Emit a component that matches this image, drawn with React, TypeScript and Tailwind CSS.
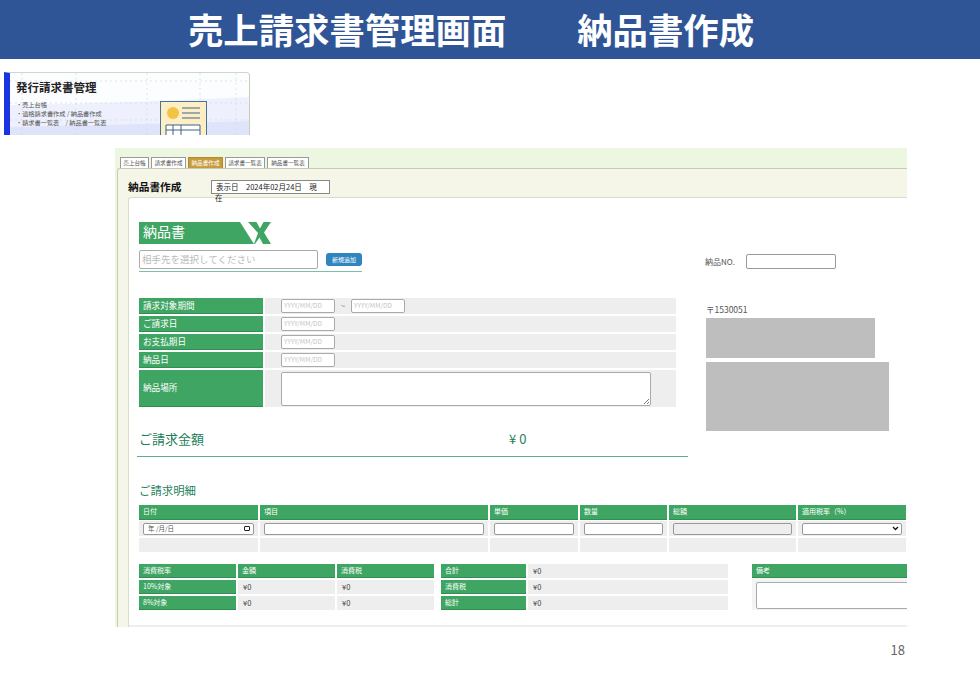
import React from "react";

const tabs = [
  { label: "売上台帳", w: "w-[29px]" },
  { label: "請求書作成", w: "w-[35px]" },
  { label: "納品書作成", w: "w-[35px]" },
  { label: "請求書一覧表", w: "w-[40px]" },
  { label: "納品書一覧表", w: "w-[42px]" },
];
const periodRows = [
  { label: "ご請求日" },
  { label: "お支払期日" },
  { label: "納品日" },
];
const detailCols = [
  { label: "日付", w: "w-[119px]" },
  { label: "項目", w: "w-[228px]" },
  { label: "単価", w: "w-[88px]" },
  { label: "数量", w: "w-[87px]" },
  { label: "総額", w: "w-[127px]" },
  { label: "適用税率（%）", w: "w-[108px]" },
];

const GreenCell = ({ children, className = "" }: { children: React.ReactNode; className?: string }) => (
  <div className={`flex items-center bg-[#3fa563] border-b border-[#2f8f52] pb-[1px] pl-[4px] text-white ${className}`}>
    {children}
  </div>
);

const DateBox = () => (
  <div className="flex h-[14px] w-[54px] items-center rounded-[2px] border border-[#aaaaaa] bg-white pl-[2px] text-[6.5px] text-[#c4c4c4]">
    YYYY/MM/DD
  </div>
);

const Yen = () => (
  <div className="flex items-center bg-[#eeeeee] pl-[5px] text-[7.5px] text-[#444444]">¥0</div>
);

const Thumbnail = () => (
  <div className="relative ml-1 mt-[13px] h-[63px] w-[246px] overflow-hidden rounded-tr-[4px] border-l-[6px] border-t border-r border-l-[#1a35e0] border-t-[#cfd8c8] border-r-[#c4cfb8] bg-[#fcfdfe]">
    <svg className="absolute inset-0" width="240" height="63" viewBox="0 0 240 63">
      <path d="M0 32 Q120 30 240 24 V63 H0Z" fill="#eef1fd" />
      <path d="M0 54 Q120 52 240 48 V63 H0Z" fill="#dfe4fa" />
      <path d="M0 8H240M0 30H240M0 47H240M12 0V63M66 0V63M137 0V63M190 0V63M226 0V63" stroke="#d4d8e2" strokeWidth="0.7" strokeDasharray="2 3" />
      <rect x="150.5" y="28.5" width="46" height="40" fill="#fdeec6" stroke="#4a7396" strokeWidth="1" />
      <circle cx="163" cy="40" r="6" fill="#f4c344" />
      <path d="M172 35H190M172 40H190M172 45H190" stroke="#3d6484" strokeWidth="1" />
      <path d="M156 52H190V63H156ZM163 52V63M171 52V63M156 57H190" fill="#ffffff" stroke="#3d6484" strokeWidth="1" />
    </svg>
    <div className="absolute left-[6px] top-[5px] text-[11.5px] leading-[18px] font-bold text-[#222222]">発行請求書管理</div>
    <div className="absolute left-[6px] top-[27px] text-[6.2px] leading-[9px] text-[#555555]">
      <div>・売上台帳</div>
      <div>・適格請求書作成 / 納品書作成</div>
      <div>・請求書一覧表　/ 納品書一覧表</div>
    </div>
  </div>
);

const InvoiceForm = () => (
  <div className="ml-[2px] flex min-h-0 flex-1 flex-col overflow-hidden rounded-tl-[3px] border-t border-l border-[#c9ccb2] bg-[#f5f5e8]">
    <div className="flex h-[28px] shrink-0 items-center pl-[10px] pt-[8px]">
      <div className="w-[83px] text-[10.7px] font-bold text-[#111111]">納品書作成</div>
      <div className="relative flex h-[14px] w-[119px] items-center border border-[#888888] bg-white pl-[4px] text-[7.5px] whitespace-nowrap text-[#222222]">
        表示日　2024年02月24日　現
        <span className="absolute left-[3px] top-[12px] leading-[9px]">在</span>
      </div>
    </div>
    <div className="ml-[10px] flex min-h-0 flex-1 flex-col rounded-tl-[3px] border-t border-l border-[#dcdccc] bg-white">
      <div className="flex flex-1 pl-[10px] pt-[24px]">
        <div className="w-[549px] shrink-0">
          <div className="flex h-[22px] items-center">
            <div className="flex h-full w-[115px] items-center bg-[#3fa563] pb-[3px] pl-[4px] text-[14px] text-white [clip-path:polygon(0_0,101px_0,100%_100%,0_100%)]">納品書</div>
            <svg width="23" height="22" viewBox="0 0 23 22" className="-ml-[6px] shrink-0">
              <path d="M0 0H8.5L12 6.5L15.5 0H23L16 10.5L23 22H15L11.5 15.5L7 22H6L10 11Z" fill="#3fa563" />
            </svg>
          </div>
          <div className="mt-[6px] flex w-[223px] items-center border-b border-[#7fbfa8] pb-[2px]">
            <div className="flex h-[19px] w-[179px] items-center rounded-[2px] border border-[#aaaaaa] pl-[2px] text-[9.5px] text-[#bbbbbb]">相手先を選択してください</div>
            <div className="ml-[8px] flex h-[13px] w-[36px] items-center justify-center rounded-[3px] bg-[#2f86bf] text-[6px] text-white">新規追加</div>
          </div>

          <div className="mt-[26px] flex flex-col gap-[2px]">
            <div className="flex h-[16px] gap-[2px]">
              <GreenCell className="w-[124px] text-[8.6px]">請求対象期間</GreenCell>
              <div className="flex w-[411px] items-center bg-[#eeeeee] pl-[16px]">
                <DateBox />
                <span className="w-[16px] text-center text-[8px] text-[#888888]">~</span>
                <DateBox />
              </div>
            </div>
            {periodRows.map((row) => (
              <div key={row.label} className="flex h-[16px] gap-[2px]">
                <GreenCell className="w-[124px] text-[8.6px]">{row.label}</GreenCell>
                <div className="flex w-[411px] items-center bg-[#eeeeee] pl-[16px]">
                  <DateBox />
                </div>
              </div>
            ))}
            <div className="flex h-[37px] gap-[2px]">
              <GreenCell className="w-[124px] text-[8.6px]">納品場所</GreenCell>
              <div className="flex w-[411px] items-center bg-[#eeeeee] pl-[16px]">
                <div className="relative h-[34px] w-[370px] rounded-[2px] border border-[#aaaaaa] bg-white">
                  <svg className="absolute bottom-0 right-0" width="7" height="7" viewBox="0 0 7 7">
                    <path d="M1 6L6 1M4 6L6 4" stroke="#555555" strokeWidth="0.8" />
                  </svg>
                </div>
              </div>
            </div>
          </div>

          <div className="-ml-[2px] mt-[23px] flex h-[27px] w-[551px] items-center border-b border-[#5fae8f] pb-[8px] pl-[2px] text-[13px] text-[#1f7f5c]">
            <span className="w-[370px]">ご請求金額</span>
            <span>¥ 0</span>
          </div>
        </div>

        <div className="flex-1 pl-[17px] pt-[32px] text-[8px] text-[#555555]">
          <div className="flex h-[15px] items-center">
            <span className="w-[41px]">納品NO.</span>
            <div className="h-[15px] w-[90px] rounded-[2px] border border-[#999999] bg-white" />
          </div>
          <div className="mt-[34px] pl-[1px] text-[8.5px] leading-[12px]">〒1530051</div>
          <div className="ml-[1px] mt-[3px] h-[40px] w-[169px] bg-[#bebebe]" />
          <div className="ml-[1px] mt-[4px] h-[69px] w-[183px] bg-[#bebebe]" />
        </div>
      </div>

      <div className="pb-[15px] pl-[10px]">
        <div className="mt-[2px] text-[11.4px] leading-[18px] text-[#1f7f5c]">ご請求明細</div>
        <div className="mt-[6px] flex gap-[2px]">
          {detailCols.map((col) => (
            <div key={col.label} className={`flex shrink-0 flex-col gap-[1px] ${col.w}`}>
              <GreenCell className="h-[15px] text-[7px]">{col.label}</GreenCell>
              <div className="flex h-[15px] items-center bg-[#eeeeee] px-[4px]">
                {col.label === "日付" ? (
                  <div className="flex h-[12px] w-full items-center justify-between rounded-[2px] border border-[#999999] bg-white pl-[4px] pr-[3px] text-[6.5px] text-[#555555]">
                    <span>年 /月/日</span>
                    <span className="h-[5px] w-[6px] rounded-[1px] border border-[#222222]" />
                  </div>
                ) : col.label === "適用税率（%）" ? (
                  <div className="flex h-[12px] w-full items-center justify-end rounded-[2px] border border-[#999999] bg-white pr-[2px]">
                    <svg width="7" height="5" viewBox="0 0 7 5"><path d="M1 1L3.5 3.5L6 1" fill="none" stroke="#111111" strokeWidth="1.3" /></svg>
                  </div>
                ) : (
                  <div className={`h-[12px] w-full rounded-[2px] border border-[#999999] ${col.label === "総額" ? "bg-[#eeeeee]" : "bg-white"}`} />
                )}
              </div>
              <div className="mt-[1px] h-[14px] bg-[#eeeeee]" />
            </div>
          ))}
        </div>

        <div className="mt-[12px] flex">
          <div className="grid w-[295px] shrink-0 grid-cols-[97px_97px_97px] gap-[2px]">
            <GreenCell className="h-[14px] text-[7px]">消費税率</GreenCell>
            <GreenCell className="h-[14px] text-[7px]">金額</GreenCell>
            <GreenCell className="h-[14px] text-[7px]">消費税</GreenCell>
            <GreenCell className="h-[14px] text-[7px]">10%対象</GreenCell>
            <Yen />
            <Yen />
            <GreenCell className="h-[14px] text-[7px]">8%対象</GreenCell>
            <Yen />
            <Yen />
          </div>
          <div className="ml-[7px] grid w-[287px] shrink-0 grid-cols-[85px_200px] gap-[2px]">
            {["合計", "消費税", "総計"].map((label) => (
              <React.Fragment key={label}>
                <GreenCell className="h-[14px] text-[7px]">{label}</GreenCell>
                <Yen />
              </React.Fragment>
            ))}
          </div>
          <div className="ml-[24px] flex w-[155px] shrink-0 flex-col overflow-hidden">
            <GreenCell className="h-[14px] text-[7px]">備考</GreenCell>
            <div className="flex-1 bg-[#f4f4f4] pl-[4px] pt-[4px]">
              <div className="h-[27px] w-[170px] rounded-[2px] border border-[#aaaaaa] bg-white" />
            </div>
          </div>
        </div>
      </div>
      <div className="h-[2px] shrink-0 bg-[#eeeeee]" />
    </div>
  </div>
);

export default function App() {
  return (
    <div className="flex h-[677px] w-[980px] flex-col overflow-hidden bg-white font-['Noto_Sans_CJK_JP','Noto_Sans',sans-serif]">
      <div className="flex h-[59px] shrink-0 items-center justify-center bg-[#2f5597] pb-[2px] pr-[38px] text-[35.4px] font-bold text-white">
        売上請求書管理画面　　納品書作成
      </div>
      <Thumbnail />
      <div className="ml-[115px] mt-[13px] flex h-[479px] w-[792px] flex-col overflow-hidden bg-[#ecf6e0]">
        <div className="flex h-[20px] shrink-0 items-end gap-[2px] pl-[5px]">
          {tabs.map((tab, i) => (
            <div
              key={tab.label}
              className={`flex h-[11px] items-center justify-center border border-b-0 text-[5.6px] whitespace-nowrap ${tab.w} ${i === 2 ? "border-[#b08a2e] bg-[#c79a3c] text-white" : "border-[#999999] bg-white text-[#555555]"}`}
            >
              {tab.label}
            </div>
          ))}
        </div>
        <InvoiceForm />
      </div>
      <div className="mt-[14px] pr-[75px] text-right text-[13px] leading-[18px] text-[#666666]">18</div>
    </div>
  );
}
